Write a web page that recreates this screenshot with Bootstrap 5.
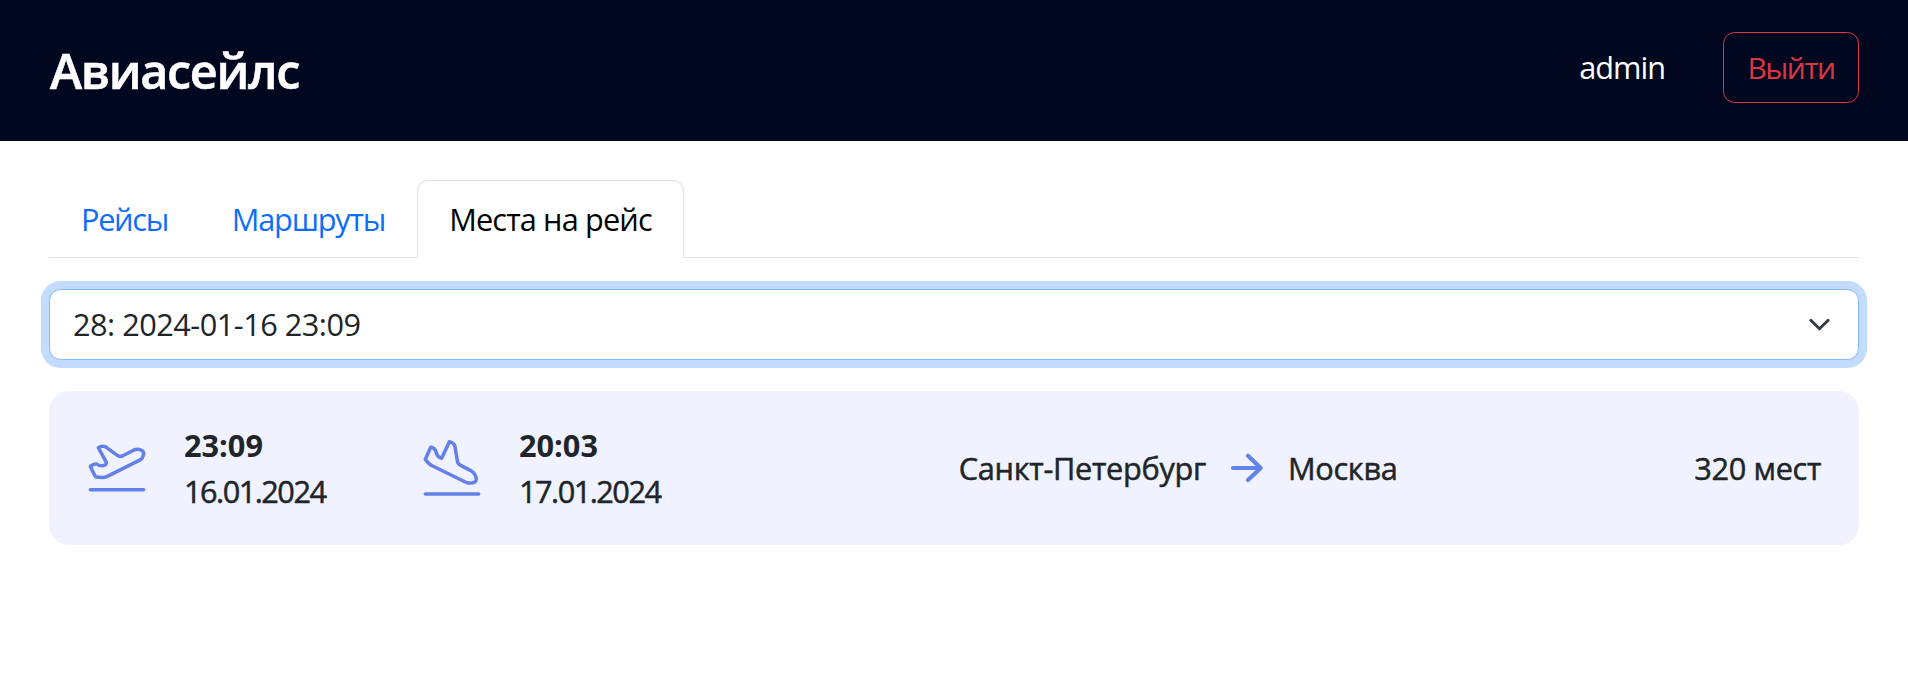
<!DOCTYPE html>
<html lang="ru">
<head>
<meta charset="utf-8">
<meta name="viewport" content="width=device-width, initial-scale=1">
<title>Авиасейлс</title>
<link href="https://cdn.jsdelivr.net/npm/bootstrap@5.3.0/dist/css/bootstrap.min.css" rel="stylesheet">
<style>
html{font-size:30.7px}
body{font-family:"Open Sans","Noto Sans",sans-serif}
.page-x{padding-left:49px;padding-right:49px}
.topbar{background:#00071e;height:141px}
.brand{font-size:48.5px;font-weight:600;line-height:1.2;letter-spacing:-1.3px;padding-left:1px;margin-bottom:1px;-webkit-text-stroke:.6px currentColor}
.account{margin-bottom:6px}
.user-name{letter-spacing:-1px;margin-right:58px}
.btn-exit{width:136px;padding-left:0;padding-right:0;height:71px;font-size:30px;line-height:1.4;letter-spacing:-1.5px}
.nav-tabs{margin-top:39px;height:78px}
.tab-a{width:151px;letter-spacing:-1.3px}
.tab-b{width:217px;letter-spacing:-1.2px}
.tab-c{width:267px;letter-spacing:-.85px}
.nav-tabs .nav-link{padding-left:0;padding-right:0;text-align:center;height:78px;white-space:nowrap}
.nav-tabs .nav-link.active{color:#000}
.flight-select{margin-top:31px;height:71px;line-height:1.45;background-size:30.7px 23px;border-color:#86b7fe;box-shadow:0 0 0 8px rgba(13,110,253,.25);letter-spacing:-.5px}
.flight{margin-top:31px;height:154px;padding:0 38px 0 36px;border-radius:20px;background:#f0f3ff;font-weight:500;-webkit-text-stroke:.5px currentColor}
.flight .fw-bold{-webkit-text-stroke:0}
.flight svg{display:block;flex:none;fill:none;stroke:#6381e8;stroke-linecap:round;stroke-linejoin:round}
.moment{margin-left:35px;width:143px;line-height:46px;white-space:nowrap}
.depart{margin-right:93px}
.arrive{width:143px}
.date{letter-spacing:-1.5px}
.cities{letter-spacing:-.3px}
.route-arrow{margin:0 24px}
.seats{letter-spacing:-.35px}
</style>
</head>
<body>
<header class="topbar page-x d-flex align-items-center justify-content-between text-white">
  <div class="brand">Авиасейлс</div>
  <div class="account d-flex align-items-center">
    <span class="user-name">admin</span>
    <button type="button" class="btn btn-outline-danger btn-exit">Выйти</button>
  </div>
</header>
<main class="page-x">
  <ul class="nav nav-tabs">
    <li class="nav-item tab-a"><a class="nav-link" href="#">Рейсы</a></li>
    <li class="nav-item tab-b"><a class="nav-link" href="#">Маршруты</a></li>
    <li class="nav-item tab-c"><a class="nav-link active" href="#">Места на рейс</a></li>
  </ul>
  <select class="form-select flight-select" aria-label="Рейс"><option>28: 2024-01-16 23:09</option></select>
  <section class="flight d-flex align-items-center justify-content-between">
    <div class="d-flex align-items-center">
      <svg width="64" height="64" viewBox="135 168 192 192" stroke-width="10.5"><path d="M151 259Q160 251 170 252Q180 260 192 256Q201 253 199 247L175 203Q185 196 196 200L232 226Q239 231 247 228L282 210Q293 206 303 210Q314 215 310 226Q308 235 302 239L202 289Q190 295 167 290Q163 286 151 259ZM151 329H311"/></svg>
      <div class="moment depart"><div class="fw-bold">23:09</div><div class="date">16.01.2024</div></div>
      <svg width="64" height="64" viewBox="60 168 192 192" stroke-width="10.5"><path d="M92 202Q107 204 109 220Q112 231 125 235L148 185Q163 189 165 200L172 242Q173 252 182 256L211 271Q227 281 229 297Q229 310 207 309Q202 309 196 306L98 258Q88 254 76 238ZM76 342H236"/></svg>
      <div class="moment arrive"><div class="fw-bold">20:03</div><div class="date">17.01.2024</div></div>
    </div>
    <div class="cities d-flex align-items-center">
      <span>Санкт-Петербург</span>
      <svg class="route-arrow" width="34" height="32" viewBox="866 95 102 96" stroke-width="12.5"><path d="M875 143H958M920 106L958 143L920 179"/></svg>
      <span>Москва</span>
    </div>
    <span class="seats">320 мест</span>
  </section>
</main>
<script src="https://cdn.jsdelivr.net/npm/bootstrap@5.3.0/dist/js/bootstrap.bundle.min.js"></script>
</body>
</html>
